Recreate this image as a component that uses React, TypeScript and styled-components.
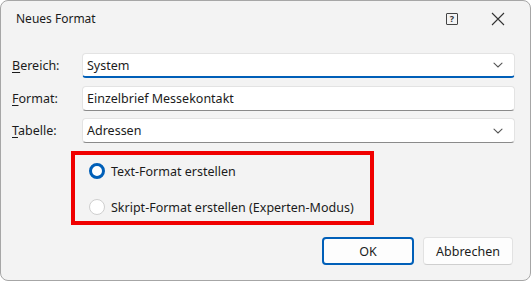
import React from 'react';
import styled, { createGlobalStyle } from 'styled-components';

const GlobalStyle = createGlobalStyle`
  html, body {
    margin: 0;
    padding: 0;
    background: #ffffff;
  }
  body {
    font-family: 'Noto Sans', 'Open Sans', sans-serif;
    font-size: 12px;
    color: #1b1b1b;
  }
`;

interface FieldProps {
  label: string,
  accessKey: string,
  value: string,
  dropdown?: boolean,
  focused?: boolean,
}

const Chevron = () => (
  <svg width="12" height="12" viewBox="0 0 12 12">
    <path d="M2 4.2 L6 8 L10 4.2" fill="none" stroke="#555" strokeWidth="1.1" strokeLinecap="round" />
  </svg>
);

const Field:React.FC<FieldProps> = ({
  label,
  accessKey,
  value,
  dropdown,
  focused,
}) => (
  <>
    <Label>
      <u>{accessKey}</u>
      {label.slice(accessKey.length)}
    </Label>
    <Input focused={focused}>
      <span>{value}</span>
      {dropdown && <Chevron />}
    </Input>
  </>
);

const App:React.FC = () => (
  <Dialog>
    <GlobalStyle />
    <TitleBar>
      <Title>Neues Format</Title>
      <TitleButtons>
        <HelpIcon>?</HelpIcon>
        <svg width="14" height="14" viewBox="0 0 14 14">
          <path d="M1 1 L13 13 M13 1 L1 13" stroke="#333" strokeWidth="1.1" />
        </svg>
      </TitleButtons>
    </TitleBar>
    <Body>
      <Form>
        <Field label="Bereich:" accessKey="B" value="System" dropdown focused />
        <Field label="Format:" accessKey="F" value="Einzelbrief Messekontakt" />
        <Field label="Tabelle:" accessKey="T" value="Adressen" dropdown />
      </Form>
      <RadioBox>
        <RadioRow>
          <Radio checked />
          Text-Format erstellen
        </RadioRow>
        <RadioRow>
          <Radio />
          Skript-Format erstellen (Experten-Modus)
        </RadioRow>
      </RadioBox>
      <Buttons>
        <Button primary>OK</Button>
        <Button>Abbrechen</Button>
      </Buttons>
    </Body>
  </Dialog>
);
export default App;


const Dialog = styled.div`
  box-sizing: border-box;
  width: 531px;
  height: 281px;
  background: #f3f3f3;
  border: 1px solid #a6a6a6;
  border-radius: 8px;
  display: flex;
  flex-direction: column;
  overflow: hidden;
`;
const TitleBar = styled.div`
  height: 36px;
  display: flex;
  align-items: center;
  justify-content: space-between;
  padding: 0 25px 0 15px;
`;
const Title = styled.div`
  font-size: 12px;
  color: #1a1a1a;
  margin-top: -1px;
`;
const TitleButtons = styled.div`
  display: flex;
  align-items: center;
  gap: 33px;
`;
const HelpIcon = styled.div`
  box-sizing: border-box;
  width: 12px;
  height: 12px;
  border: 1.5px solid #444;
  border-radius: 1px;
  font-size: 9px;
  font-weight: bold;
  line-height: 9px;
  text-align: center;
  color: #333;
`;
const Body = styled.div`
  padding: 16px 15px 0 10px;
  display: flex;
  flex-direction: column;
`;
const Form = styled.div`
  display: grid;
  grid-template-columns: 71px 1fr;
  grid-auto-rows: 25px;
  row-gap: 7.5px;
  align-items: center;
`;
const Label = styled.div`
  font-size: 12.5px;
  color: #1b1b1b;
  padding-left: 1px;
  u {
    text-decoration-thickness: 1px;
    text-underline-offset: 2px;
  }
`;
const Input = styled.div<{ focused?: boolean }>`
  box-sizing: border-box;
  height: 25px;
  background: #ffffff;
  border: 1px solid #e3e3e3;
  border-bottom: ${(p) => (p.focused ? '2px solid #005fb8' : '1px solid #8a8a8a')};
  border-radius: 4px;
  display: flex;
  align-items: center;
  justify-content: space-between;
  padding: 0 10px 0 4px;
  font-size: 12.5px;
  color: #1b1b1b;
  span {
    margin-top: ${(p) => (p.focused ? '1px' : '0')};
  }
`;
const RadioBox = styled.div`
  box-sizing: border-box;
  margin: 8px 0 0 60px;
  width: 303px;
  height: 74px;
  border: 4px solid #f00000;
  padding: 8px 0 0 14px;
  display: flex;
  flex-direction: column;
  gap: 20px;
`;
const RadioRow = styled.div`
  display: flex;
  align-items: center;
  gap: 6px;
  font-size: 12.5px;
  color: #1b1b1b;
  height: 16px;
`;
const Radio = styled.span<{ checked?: boolean }>`
  box-sizing: border-box;
  width: 16px;
  height: 16px;
  border-radius: 50%;
  background: #ffffff;
  border: ${(p) => (p.checked ? '3.5px solid #005fb8' : '1px solid #cfcfcf')};
  flex: 0 0 auto;
`;
const Buttons = styled.div`
  display: flex;
  justify-content: flex-end;
  gap: 9px;
  margin-top: 12px;
  margin-right: 2px;
`;
const Button = styled.div<{ primary?: boolean }>`
  box-sizing: border-box;
  width: ${(p) => (p.primary ? '92px' : '90px')};
  height: 28px;
  background: #fdfdfd;
  border: ${(p) => (p.primary ? '2px solid #005fb8' : '1px solid #e2e2e2')};
  border-bottom-color: ${(p) => (p.primary ? '#005fb8' : '#cfcfcf')};
  border-radius: 4px;
  display: flex;
  align-items: center;
  justify-content: center;
  font-size: 12.5px;
  color: #1b1b1b;
`;
